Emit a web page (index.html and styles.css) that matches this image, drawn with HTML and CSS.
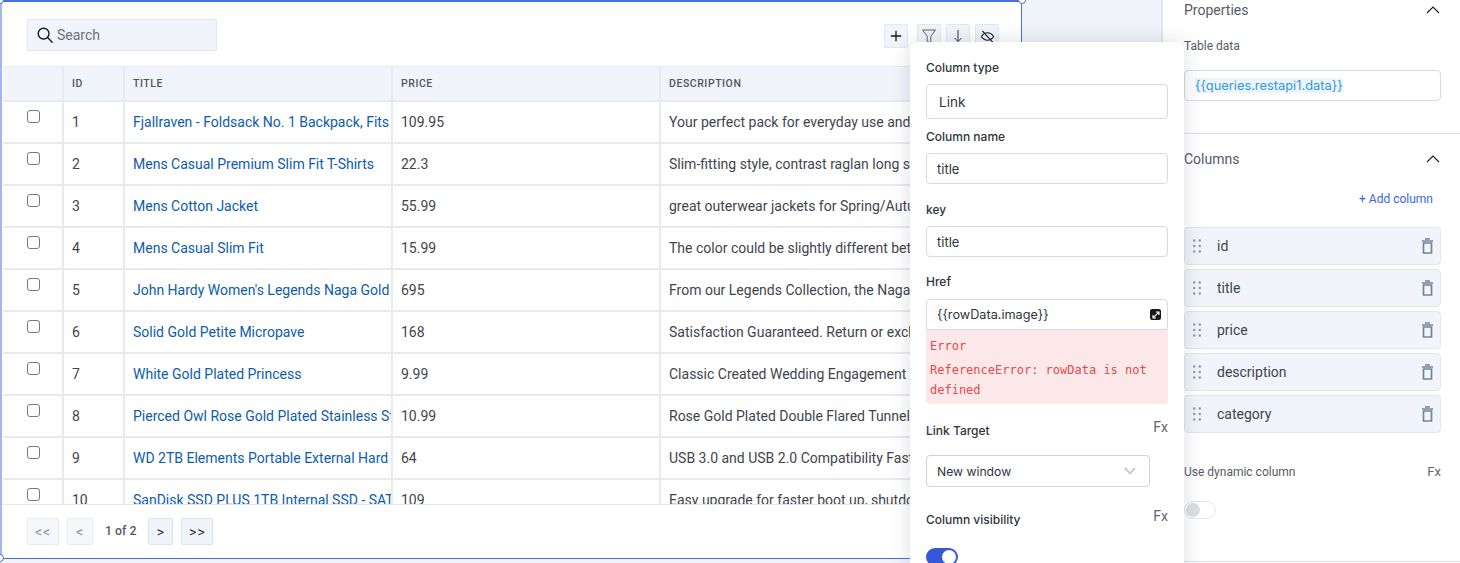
FILE: index.html
```html
<!DOCTYPE html>
<html lang="en">
<head>
<meta charset="utf-8">
<title>Table editor</title>
<link rel="stylesheet" href="styles.css">
</head>
<body>
<div class="app">
  <main class="canvas">
    <section class="widget">
      <span class="handle h-tl"></span><span class="handle h-tr"></span><span class="handle h-bl"></span>
      <div class="toolbar">
        <div class="search">
          <svg class="ico" width="18" height="18" viewBox="0 0 18 18" fill="none" stroke="#16191d" stroke-width="1.4"><circle cx="7.6" cy="7.6" r="5.4"/><path d="M11.6 11.6l4.6 4.6" stroke-linecap="round"/></svg>
          <span>Search</span>
        </div>
        <div class="tools">
          <button class="tool tool-first"><svg width="12" height="12" viewBox="0 0 12 12" stroke="#16191d" stroke-width="1.3"><path d="M6 .8v10.4M.8 6h10.4"/></svg></button>
          <button class="tool"><svg width="16" height="16" viewBox="0 0 16 16" fill="none" stroke="#5b6169" stroke-width="1"><path d="M1.5 2h13L9.8 8.2V15l-3.6-1.8V8.2z" stroke-linejoin="round"/></svg></button>
          <button class="tool"><svg width="12" height="14" viewBox="0 0 12 14" fill="none" stroke="#30353b" stroke-width="1"><path d="M6 1v11.5M2.500 9L6 12.500 9.500 9"/></svg></button>
          <button class="tool"><svg width="15" height="15" viewBox="0 0 16 16" fill="none" stroke="#16191d" stroke-width="1.200"><path d="M1.500 8S4 4 8 4s6.500 4 6.500 4-2.500 4-6.500 4-6.500-4-6.500-4z"/><path d="M2.500 2l11 12"/></svg></button>
        </div>
      </div>
      <div class="table-wrap">
        <table class="grid">
          <colgroup><col class="c-check"><col class="c-id"><col class="c-text"><col class="c-text"><col></colgroup>
          <thead><tr><th></th><th>ID</th><th>TITLE</th><th>PRICE</th><th>DESCRIPTION</th></tr></thead>
          <tbody>
            <tr><td class="chk"><input type="checkbox"></td><td>1</td><td class="link">Fjallraven - Foldsack No. 1 Backpack, Fits 15 Laptops</td><td>109.95</td><td>Your perfect pack for everyday use and walks in the forest.</td></tr>
            <tr><td class="chk"><input type="checkbox"></td><td>2</td><td class="link">Mens Casual Premium Slim Fit T-Shirts</td><td>22.3</td><td>Slim-fitting style, contrast raglan long sleeve, three-button</td></tr>
            <tr><td class="chk"><input type="checkbox"></td><td>3</td><td class="link">Mens Cotton Jacket</td><td>55.99</td><td>great outerwear jackets for Spring/Autumn/Winter, suitable</td></tr>
            <tr><td class="chk"><input type="checkbox"></td><td>4</td><td class="link">Mens Casual Slim Fit</td><td>15.99</td><td>The color could be slightly different between on the screen</td></tr>
            <tr><td class="chk"><input type="checkbox"></td><td>5</td><td class="link">John Hardy Women's Legends Naga Gold &amp; Silver Dragon</td><td>695</td><td>From our Legends Collection, the Naga was inspired by</td></tr>
            <tr><td class="chk"><input type="checkbox"></td><td>6</td><td class="link">Solid Gold Petite Micropave</td><td>168</td><td>Satisfaction Guaranteed. Return or exchange any order</td></tr>
            <tr><td class="chk"><input type="checkbox"></td><td>7</td><td class="link">White Gold Plated Princess</td><td>9.99</td><td>Classic Created Wedding Engagement Solitaire Diamond</td></tr>
            <tr><td class="chk"><input type="checkbox"></td><td>8</td><td class="link">Pierced Owl Rose Gold Plated Stainless Steel Double</td><td>10.99</td><td>Rose Gold Plated Double Flared Tunnel Plug Earrings</td></tr>
            <tr><td class="chk"><input type="checkbox"></td><td>9</td><td class="link">WD 2TB Elements Portable External Hard Drive - USB 3.0</td><td>64</td><td>USB 3.0 and USB 2.0 Compatibility Fast data transfers</td></tr>
            <tr><td class="chk"><input type="checkbox"></td><td>10</td><td class="link">SanDisk SSD PLUS 1TB Internal SSD - SATA III 6 Gb/s</td><td>109</td><td>Easy upgrade for faster boot up, shutdown, application</td></tr>
          </tbody>
        </table>
      </div>
      <div class="pager">
        <button class="page page-wide" disabled>&lt;&lt;</button>
        <button class="page" disabled>&lt;</button>
        <span class="page-count">1 of 2</span>
        <button class="page page-next">&gt;</button>
        <button class="page page-wide">&gt;&gt;</button>
      </div>
    </section>
  </main>

  <aside class="panel">
    <div class="panel-head"><span>Properties</span><svg class="chev" width="14" height="8" viewBox="0 0 14 8" fill="none" stroke="#16191d" stroke-width="1.100"><path d="M1 7l6-6 6 6"/></svg></div>
    <div class="panel-label">Table data</div>
    <div class="code-input"><span class="code-mark">{{queries.restapi1.data}}</span></div>
    <hr class="rule rule-a">
    <div class="panel-head head-b"><span>Columns</span><svg class="chev" width="14" height="8" viewBox="0 0 14 8" fill="none" stroke="#16191d" stroke-width="1.100"><path d="M1 7l6-6 6 6"/></svg></div>
    <div class="add-col">+ Add column</div>
    <ul class="cols">
      <li class="col-row"><svg class="grip" width="8" height="14" viewBox="0 0 8 14" fill="#8c9aaf"><circle cx="1.200" cy="1.500" r="1.200"/><circle cx="6.800" cy="1.500" r="1.200"/><circle cx="1.200" cy="7" r="1.200"/><circle cx="6.800" cy="7" r="1.200"/><circle cx="1.200" cy="12.500" r="1.200"/><circle cx="6.800" cy="12.500" r="1.200"/></svg><span class="col-name">id</span><svg class="bin" width="11" height="16" viewBox="0 0 11 16" fill="none" stroke="#72849b" stroke-width="1.700"><path d="M0 3h11M3 1h5M1.500 5h8v10h-8z"/></svg></li>
      <li class="col-row"><svg class="grip" width="8" height="14" viewBox="0 0 8 14" fill="#8c9aaf"><circle cx="1.200" cy="1.500" r="1.200"/><circle cx="6.800" cy="1.500" r="1.200"/><circle cx="1.200" cy="7" r="1.200"/><circle cx="6.800" cy="7" r="1.200"/><circle cx="1.200" cy="12.500" r="1.200"/><circle cx="6.800" cy="12.500" r="1.200"/></svg><span class="col-name">title</span><svg class="bin" width="11" height="16" viewBox="0 0 11 16" fill="none" stroke="#72849b" stroke-width="1.700"><path d="M0 3h11M3 1h5M1.500 5h8v10h-8z"/></svg></li>
      <li class="col-row"><svg class="grip" width="8" height="14" viewBox="0 0 8 14" fill="#8c9aaf"><circle cx="1.200" cy="1.500" r="1.200"/><circle cx="6.800" cy="1.500" r="1.200"/><circle cx="1.200" cy="7" r="1.200"/><circle cx="6.800" cy="7" r="1.200"/><circle cx="1.200" cy="12.500" r="1.200"/><circle cx="6.800" cy="12.500" r="1.200"/></svg><span class="col-name">price</span><svg class="bin" width="11" height="16" viewBox="0 0 11 16" fill="none" stroke="#72849b" stroke-width="1.700"><path d="M0 3h11M3 1h5M1.500 5h8v10h-8z"/></svg></li>
      <li class="col-row"><svg class="grip" width="8" height="14" viewBox="0 0 8 14" fill="#8c9aaf"><circle cx="1.200" cy="1.500" r="1.200"/><circle cx="6.800" cy="1.500" r="1.200"/><circle cx="1.200" cy="7" r="1.200"/><circle cx="6.800" cy="7" r="1.200"/><circle cx="1.200" cy="12.500" r="1.200"/><circle cx="6.800" cy="12.500" r="1.200"/></svg><span class="col-name">description</span><svg class="bin" width="11" height="16" viewBox="0 0 11 16" fill="none" stroke="#72849b" stroke-width="1.700"><path d="M0 3h11M3 1h5M1.500 5h8v10h-8z"/></svg></li>
      <li class="col-row"><svg class="grip" width="8" height="14" viewBox="0 0 8 14" fill="#8c9aaf"><circle cx="1.200" cy="1.500" r="1.200"/><circle cx="6.800" cy="1.500" r="1.200"/><circle cx="1.200" cy="7" r="1.200"/><circle cx="6.800" cy="7" r="1.200"/><circle cx="1.200" cy="12.500" r="1.200"/><circle cx="6.800" cy="12.500" r="1.200"/></svg><span class="col-name">category</span><svg class="bin" width="11" height="16" viewBox="0 0 11 16" fill="none" stroke="#72849b" stroke-width="1.700"><path d="M0 3h11M3 1h5M1.500 5h8v10h-8z"/></svg></li>
    </ul>
    <div class="dyn-row"><span>Use dynamic column</span><span class="fx">Fx</span></div>
    <span class="toggle-off"></span>
    <hr class="rule rule-b">
  </aside>

  <div class="popover">
    <div class="pop-label">Column type</div>
    <div class="pop-input type-input">Link</div>
    <div class="pop-label l-name">Column name</div>
    <div class="pop-input name-input">title</div>
    <div class="pop-label l-key">key</div>
    <div class="pop-input name-input">title</div>
    <div class="pop-label l-href">Href</div>
    <div class="pop-input href-input"><span>{{rowData.image}}</span>
      <span class="expand"><svg width="8" height="8" viewBox="0 0 8 8" fill="none" stroke="#fff" stroke-width="1.100"><path d="M1.200 6.800l5.600-5.600M4 1h3v3M1 4v3h3"/></svg></span>
    </div>
    <div class="pop-error"><div>Error</div><div class="err-msg">ReferenceError: rowData is not defined</div></div>
    <div class="pop-row row-target"><span class="pop-label">Link Target</span><span class="fx pop-fx">Fx</span></div>
    <div class="pop-select"><span>New window</span><svg width="12" height="8" viewBox="0 0 12 8" fill="none" stroke="#c9ccd0" stroke-width="2"><path d="M1 1l5 5.500L11 1"/></svg></div>
    <div class="pop-row row-vis"><span class="pop-label">Column visibility</span><span class="fx pop-fx">Fx</span></div>
    <span class="toggle-on"></span>
  </div>
</div>
</body>
</html>
```
FILE: styles.css
```css
* { box-sizing: border-box; }
html, body { margin: 0; height: 100%; overflow: hidden; }
body { font-family: Roboto, "Noto Sans", sans-serif; color: #30353b; background: #fff; }
.app { position: relative; display: flex; width: 1460px; height: 563px; overflow: hidden; }

.canvas { width: 1163px; height: 563px; background: #f0f3f9; border-right: 2px solid #e3e6ea; flex: none; }
.widget { position: relative; width: 1022px; height: 559px; background: #fff; border: 1px solid #4a6fe0; border-top-width: 2px; border-left-width: 2px; border-left-color: #a3b6f2; display: flex; flex-direction: column; }
.handle { position: absolute; width: 8px; height: 8px; border: 1px solid #4a6fe0; background: #fff; border-radius: 50%; }
.h-tl { left: -6px; top: -6px; }
.h-tr { right: -5px; top: -6px; }
.h-bl { left: -6px; bottom: -4px; }

.toolbar { height: 64px; flex: none; padding: 17px 0 0 25px; display: flex; justify-content: space-between; align-items: flex-start; }
.search { width: 190px; height: 32px; background: #f1f4fa; border: 1px solid #e3e6ea; display: flex; align-items: center; gap: 3px; padding-left: 8px; font-size: 14px; color: #6a7077; }
.tools { display: flex; gap: 5px; padding-top: 5px; padding-right: 22px; }
.tool { width: 24px; height: 24px; padding: 0; background: #f1f4fa; border: 1px solid #e3e6ea; border-radius: 2px; display: flex; align-items: center; justify-content: center; }
.tool-first { margin-right: 4px; }

.table-wrap { height: 439px; flex: none; overflow: hidden; padding-left: 1px; border-bottom: 1px solid #e4e6ea; }
.grid { width: 1017px; border-collapse: collapse; table-layout: fixed; }
.c-check { width: 60px; }
.c-id { width: 61px; }
.c-text { width: 268px; }
.grid th { height: 34px; background: #f1f4fa; border: 2px solid #e8eaed; border-top-width: 1px; text-align: left; font-size: 10.500px; font-weight: 500; letter-spacing: .55px; color: #4f565e; padding: 0 8px; }
.grid td { height: 42px; border: 2px solid #e8eaed; border-top: 0; padding: 0 8px; font-size: 14px; color: #3f454c; white-space: nowrap; overflow: hidden; }
.grid th:first-child, .grid td:first-child { border-left: 0; }
.grid td.link { color: #0d5cad; padding-right: 0; }
.grid td.chk { vertical-align: top; padding: 8px 0 0 24px; }
.chk input { appearance: none; display: block; width: 13px; height: 13px; margin: 0; border: 1px solid #77797c; border-radius: 3px; background: #fff; }

.pager { flex: none; display: flex; align-items: center; padding: 0 0 0 25px; height: 53px; background: #fff; }
.page { height: 27px; width: 26px; margin-right: 8px; padding: 0; border: 1px solid #dfe2e6; border-radius: 2px; background: #f1f4fa; font: 400 14px/1 Roboto, sans-serif; color: #30353b; letter-spacing: 1px; }
.page-wide { width: 32px; }
.page-next { width: 25px; }
.page:disabled { color: #8a9097; background: #f5f7fa; border-color: #e8eaed; }
.page-count { font-size: 12.300px; font-weight: 500; color: #555b63; margin: -2px 12px 0 4px; }

.panel { flex: 1; position: relative; padding: 0 19px 0 21px; font-size: 14px; background: #fff; }
.panel-head { display: flex; justify-content: space-between; align-items: center; height: 20px; font-size: 14px; color: #555b63; }
.chev { margin-right: 1px; }
.panel-label { margin-top: 18px; font-size: 12px; line-height: 16px; color: #555b63; }
.code-input { margin-top: 16px; height: 31px; border: 1px solid #d9dcdf; border-radius: 4px; padding: 6px 10px; font-family: Inter, sans-serif; font-size: 12.850px; line-height: 17px; color: #2e9ae0; }
.code-mark { background: #edf5fb; }
.rule { border: 0; border-top: 1px solid #dcdfe2; margin: 0 -19px 0 0; }
.rule-a { margin-top: 32px; }
.head-b { margin-top: 15px; }
.add-col { margin-top: 22px; padding-right: 8px; text-align: right; font-size: 12px; line-height: 16px; color: #3b66e0; }
.cols { list-style: none; margin: 20px 0 0; padding: 0; display: flex; flex-direction: column; gap: 4px; }
.col-row { height: 38px; background: #f1f4fa; border: 1px solid #e3e6ea; border-radius: 4px; display: flex; align-items: center; padding: 0 7px 0 8px; }
.col-name { flex: 1; margin-left: 16px; font-size: 14px; color: #3f454c; }
.dyn-row { margin-top: 31px; display: flex; justify-content: space-between; font-size: 12px; line-height: 16px; color: #555b63; }
.fx { font-size: 13px; color: #60666d; }
.toggle-off { display: block; margin-top: 21px; width: 32px; height: 18px; border: 1px solid #e3e6ea; border-radius: 9px; position: relative; }
.toggle-off::before { content: ""; position: absolute; left: 1px; top: 1px; width: 14px; height: 14px; border-radius: 50%; background: #dddfe2; }
.rule-b { margin-top: 42px; }

.popover { position: absolute; left: 910px; top: 42px; width: 274px; height: 540px; padding: 18px 16px; background: #fff; border-radius: 8px; box-shadow: 0 0 20px rgba(40, 50, 70, .16); font-family: Inter, sans-serif; color: #30353b; }
.pop-label { font-size: 12px; font-weight: 500; line-height: 15px; color: #30353b; }
.pop-input { margin-top: 9px; width: 242px; border: 1px solid #d7d9dc; border-radius: 4px; font-size: 13px; color: #30353b; display: flex; align-items: center; }
.type-input { height: 35px; padding-left: 12px; font-size: 13.500px; }
.name-input { height: 31px; padding-left: 10px; }
.l-name { margin-top: 10px; }
.l-key { margin-top: 18px; }
.l-href { margin-top: 17px; }
.href-input { margin-top: 10px; height: 31px; padding: 0 6px 0 10px; justify-content: space-between; border-radius: 4px 4px 0 0; font-size: 12.700px; }
.expand { width: 11px; height: 11px; background: #16191d; border-radius: 2px; display: flex; align-items: center; justify-content: center; }
.pop-error { width: 242px; height: 74px; padding: 6px 4px; background: #fce8e8; border-radius: 0 0 4px 4px; font-family: "DejaVu Sans Mono", monospace; font-size: 12px; line-height: 20px; color: #e5484d; }
.err-msg { margin-top: 4px; }
.pop-row { display: flex; justify-content: space-between; align-items: flex-start; width: 242px; }
.row-target { margin-top: 19px; }
.pop-fx { font-family: Roboto, sans-serif; font-size: 14px; margin-top: -4px; }
.pop-select { margin-top: 17px; width: 224px; height: 32px; border: 1px solid #cfd2d6; border-radius: 4px; padding: 0 13px 0 10px; display: flex; align-items: center; justify-content: space-between; font-size: 12.200px; }
.row-vis { margin-top: 25px; }
.toggle-on { display: block; position: relative; margin-top: 21px; width: 32px; height: 18px; border-radius: 9px; background: #3559d6; }
.toggle-on::before { content: ""; position: absolute; right: 2px; top: 2px; width: 14px; height: 14px; background: #fff; border-radius: 50%; }
```
